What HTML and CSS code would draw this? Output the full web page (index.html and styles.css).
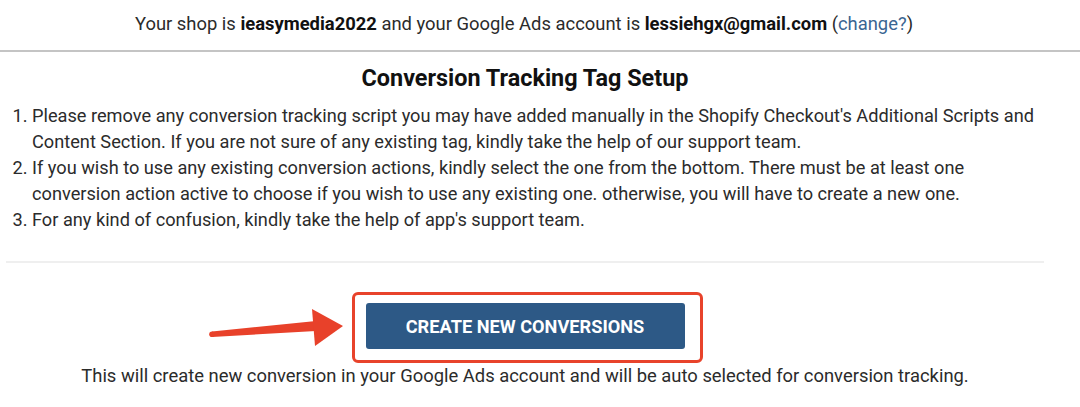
FILE: index.html
```html
<!DOCTYPE html>
<html lang="en">
<head>
<meta charset="UTF-8" />
<meta name="viewport" content="width=device-width, initial-scale=1" />
<title>Conversion Tracking Tag Setup</title>
<link rel="stylesheet" href="styles.css">
</head>
<body>

<div class="topbar">
  Your shop is <b>ieasymedia2022</b> and your Google Ads account is <b>lessiehgx@gmail.com</b> (<a href="#">change?</a>)
</div>

<div class="panel">
  <h2 class="panel-title">Conversion Tracking Tag Setup</h2>

  <ol class="steps">
    <li>Please remove any conversion tracking script you may have added manually in the Shopify Checkout's Additional Scripts and Content Section. If you are not sure of any existing tag, kindly take the help of our support team.</li>
    <li>If you wish to use any existing conversion actions, kindly select the one from the bottom. There must be at least one conversion action active to choose if you wish to use any existing one. otherwise, you will have to create a new one.</li>
    <li>For any kind of confusion, kindly take the help of app's support team.</li>
  </ol>

  <hr class="divider">

  <div class="action">
    <div class="btn-wrap">
      <!-- annotation arrow -->
      <svg class="arrow" width="150" height="50" viewBox="0 0 150 50">
        <polygon points="11,31.5 115,21 115,31 11,37" fill="#e8412a" />
        <circle cx="11" cy="34.2" r="2.8" fill="#e8412a" />
        <polygon points="111,9 142,26 114,46" fill="#e8412a" />
      </svg>
      <span class="highlight"></span>
      <button class="btn-create">Create New Conversions</button>
    </div>
    <p class="action-note">This will create new conversion in your Google Ads account and will be auto selected for conversion tracking.</p>
  </div>
</div>

</body>
</html>
```

FILE: styles.css
```css
body {
  margin: 0;
  font-family: Roboto, 'Liberation Sans', sans-serif;
  color: #2b2b2b;
  background: #fff;
}

.topbar {
  padding: 11px 32px 13px 0;
  line-height: 26px;
  font-size: 18.4px;
  text-align: center;
  border-bottom: 2px solid #c4c4c4;
}
.topbar b {
  color: #111;
}
.topbar a {
  color: #3a6592;
  text-decoration: none;
}

.panel {
  margin: 0 36px 0 6px;
}

.panel-title {
  margin: 13px 0 12px;
  font-size: 23.4px;
  line-height: 26px;
  font-weight: 700;
  color: #111;
  text-align: center;
}

.steps {
  margin: 0;
  padding: 0 0 0 26px;
  font-size: 18.2px;
  line-height: 26px;
}

.divider {
  margin: 28px 0 0;
  border: none;
  border-top: 2px solid #efefef;
}

.action {
  text-align: center;
  padding-top: 40px;
}

.btn-wrap {
  position: relative;
  display: inline-block;
}

.btn-create {
  display: block;
  width: 319px;
  height: 46px;
  border: none;
  border-radius: 3px;
  background: #2d5986;
  color: #fff;
  font-family: Roboto, 'Liberation Sans', sans-serif;
  font-size: 18.2px;
  font-weight: 700;
  text-transform: uppercase;
}

.highlight {
  position: absolute;
  left: -14px;
  top: -11px;
  right: -18px;
  bottom: -14px;
  border: 3px solid #e8432b;
  border-radius: 6px;
}

.arrow {
  position: absolute;
  left: -165px;
  top: -3px;
}

.action-note {
  margin: 14px 0 0;
  font-size: 18.4px;
  line-height: 26px;
}
```
